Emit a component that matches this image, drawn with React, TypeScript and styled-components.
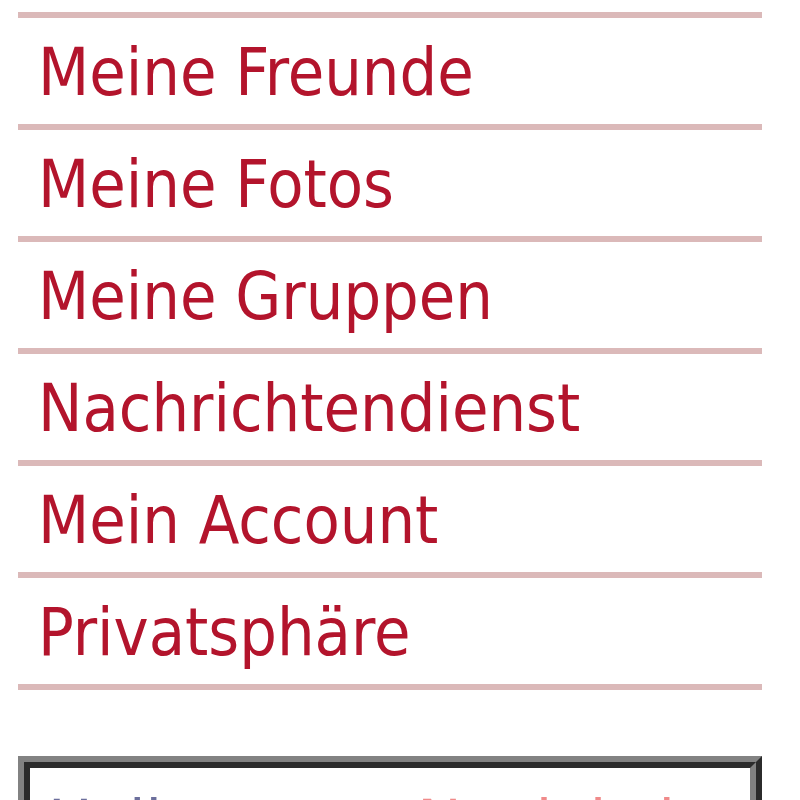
import React from 'react'
import styled, { createGlobalStyle } from 'styled-components'

const items = [
  'Meine Freunde',
  'Meine Fotos',
  'Meine Gruppen',
  'Nachrichtendienst',
  'Mein Account',
  'Privatsphäre',
]

const App = () => {
  return (
    <>
      <GlobalStyle />
      <Page>
        <Menu>
          {items.map((label) => (
            <MenuItem key={label}>
              <MenuLink href="#">{label}</MenuLink>
            </MenuItem>
          ))}
        </Menu>
        <InfoBox>
          <InfoInner>
            <InfoText>
              Hallo <InfoAccent>Neuigkeiten</InfoAccent>
            </InfoText>
          </InfoInner>
        </InfoBox>
      </Page>
    </>
  )
}

const GlobalStyle = createGlobalStyle`
  html, body {
    margin: 0;
    padding: 0;
    background: #ffffff;
    overflow: hidden;
  }
`

const Page = styled.div`
  box-sizing: border-box;
  width: 800px;
  height: 800px;
  overflow: hidden;
  padding: 12px 38px 0 18px;
  font-family: 'DejaVu Sans Condensed', 'DejaVu Sans', Verdana, sans-serif;
  font-stretch: condensed;
`

const Menu = styled.ul`
  list-style: none;
  margin: 0;
  padding: 0;
  border-top: 6px solid #dbb9b9;
`

const MenuItem = styled.li`
  box-sizing: border-box;
  height: 112px;
  padding: 6px 0 0 20px;
  border-bottom: 6px solid #dbb9b9;
  line-height: 98px;
`

const MenuLink = styled.a`
  color: #b3142c;
  font-size: 66px;
  text-decoration: none;
  white-space: nowrap;
`

const InfoBox = styled.div`
  margin-top: 66px;
  border-style: solid;
  border-width: 6px;
  border-color: #828282 #2b2b2b #2b2b2b #828282;
`

const InfoInner = styled.div`
  border-style: solid;
  border-width: 6px;
  border-color: #2b2b2b #828282 #828282 #2b2b2b;
  background: #ffffff;
  height: 200px;
  padding: 24px 0 0 18px;
`

const InfoText = styled.div`
  color: #6c6f9c;
  font-size: 66px;
  line-height: 1;
  white-space: nowrap;
`

const InfoAccent = styled.span`
  color: #f08a8a;
  margin-left: 200px;
`

export default App
